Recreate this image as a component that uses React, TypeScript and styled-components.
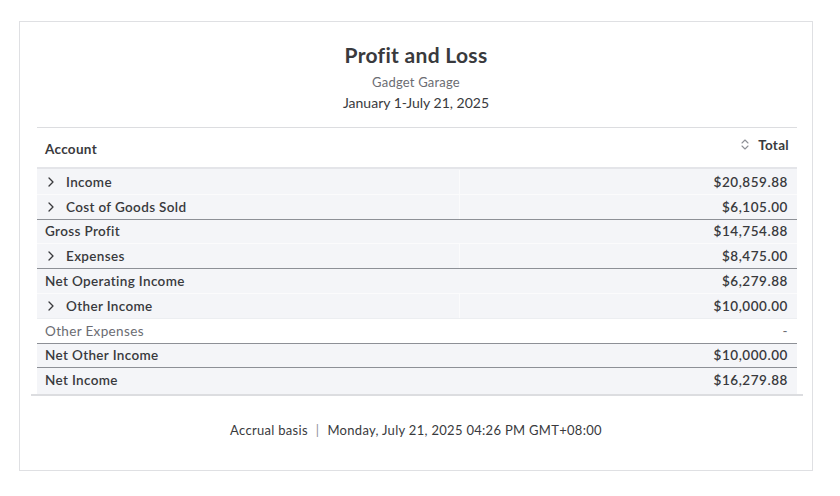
import React from "react";
import styled, { createGlobalStyle } from "styled-components";

const GlobalStyle = createGlobalStyle`
  html, body { margin: 0; padding: 0; background: #ffffff; }
  body { font-family: Lato, "Noto Sans", sans-serif; color: #393a3d; -webkit-font-smoothing: antialiased; }
`;

const Page = styled.div`
  padding: 21px 0 0 19px;
`;

const Card = styled.div`
  box-sizing: border-box;
  width: 794px;
  height: 450px;
  border: 1px solid #dfe0e3;
  background: #ffffff;
  display: flex;
  flex-direction: column;
`;

const Header = styled.header`
  text-align: center;
  padding-top: 19px;
`;

const Title = styled.h1`
  margin: 0;
  font-size: 21px;
  line-height: 28px;
  font-weight: 700;
  letter-spacing: 0.3px;
  color: #393a3d;
`;

const Company = styled.div`
  margin-top: 4px;
  font-size: 13px;
  line-height: 18px;
  letter-spacing: 0.2px;
  color: #6b6c72;
`;

const Period = styled.div`
  margin-top: 2px;
  font-size: 14px;
  line-height: 20px;
  color: #393a3d;
`;

const TableArea = styled.div`
  margin: 14px 9px 0 11px;
  border-bottom: 2px solid #dcdde0;
`;

const Table = styled.div`
  margin: 0 6px;
  border-top: 1px solid #dcdde0;
`;

const HeadRow = styled.div`
  display: flex;
  align-items: center;
  justify-content: space-between;
  height: 39px;
  padding: 0 8px;
  border-bottom: 2px solid #e4e5e9;
  font-size: 13.5px;
  font-weight: 700;
  letter-spacing: 0.3px;
  color: #393a3d;
`;

const HeadLabel = styled.span<{ $lift?: boolean }>`
  display: inline-flex;
  align-items: center;
  gap: 9px;
  transform: translateY(${(p) => (p.$lift ? "-3px" : "1px")});
`;

type Kind = "group" | "total" | "plain";

const Row = styled.div<{ $kind: Kind }>`
  display: grid;
  grid-template-columns: 423px 1fr;
  height: 24.8px;
  box-sizing: border-box;
  background: ${(p) => (p.$kind === "plain" ? "#ffffff" : "#f4f5f8")};
  border-top: 1px solid
    ${(p) => (p.$kind === "total" ? "#8d9096" : p.$kind === "group" ? "#fbfbfc" : "#eceef1")};
  font-size: 13.5px;
  letter-spacing: 0.35px;
  font-weight: ${(p) => (p.$kind === "plain" ? 400 : 600)};
  color: ${(p) => (p.$kind === "plain" ? "#6b6c72" : "#393a3d")};
  &:first-child {
    border-top-color: transparent;
  }
  &:last-child {
    height: 26.5px;
    padding-bottom: 1.5px;
  }
`;

const LabelCell = styled.div<{ $divider: boolean }>`
  display: flex;
  align-items: center;
  gap: 9px;
  padding-left: 8px;
  border-right: 1px solid ${(p) => (p.$divider ? "#fbfbfc" : "transparent")};
`;

const ValueCell = styled.div`
  display: flex;
  align-items: center;
  justify-content: flex-end;
  padding-right: 9px;
  letter-spacing: 0.55px;
`;

const Footer = styled.div`
  margin-top: 25px;
  text-align: center;
  font-size: 13px;
  line-height: 18px;
  letter-spacing: 0.3px;
  color: #393a3d;
`;

const Sep = styled.span`
  display: inline-block;
  margin: 0 8px;
  color: #8d9096;
`;

const Chevron = () => (
  <svg width="12" height="12" viewBox="0 0 12 12" fill="none">
    <path d="M4 2 L8 6 L4 10" stroke="#393a3d" strokeWidth="1.3" strokeLinecap="round" strokeLinejoin="round" />
  </svg>
);

const SortIcon = () => (
  <svg width="8" height="11" viewBox="0 0 8 11" fill="none">
    <path d="M1 4 L4 1 L7 4" stroke="#8d9096" strokeWidth="1.1" strokeLinecap="round" strokeLinejoin="round" />
    <path d="M1 7 L4 10 L7 7" stroke="#8d9096" strokeWidth="1.1" strokeLinecap="round" strokeLinejoin="round" />
  </svg>
);

const rows: { kind: Kind; label: string; value: string }[] = [
  { kind: "group", label: "Income", value: "$20,859.88" },
  { kind: "group", label: "Cost of Goods Sold", value: "$6,105.00" },
  { kind: "total", label: "Gross Profit", value: "$14,754.88" },
  { kind: "group", label: "Expenses", value: "$8,475.00" },
  { kind: "total", label: "Net Operating Income", value: "$6,279.88" },
  { kind: "group", label: "Other Income", value: "$10,000.00" },
  { kind: "plain", label: "Other Expenses", value: "-" },
  { kind: "total", label: "Net Other Income", value: "$10,000.00" },
  { kind: "total", label: "Net Income", value: "$16,279.88" },
];

export default function App() {
  return (
    <>
      <GlobalStyle />
      <Page>
        <Card>
          <Header>
            <Title>Profit and Loss</Title>
            <Company>Gadget Garage</Company>
            <Period>January 1-July 21, 2025</Period>
          </Header>
          <TableArea>
            <Table>
              <HeadRow>
                <HeadLabel>Account</HeadLabel>
                <HeadLabel $lift>
                  <SortIcon />
                  Total
                </HeadLabel>
              </HeadRow>
              <div>
                {rows.map((r) => (
                  <Row key={r.label} $kind={r.kind}>
                    <LabelCell $divider={r.kind === "group"}>
                      {r.kind === "group" && <Chevron />}
                      {r.label}
                    </LabelCell>
                    <ValueCell>{r.value}</ValueCell>
                  </Row>
                ))}
              </div>
            </Table>
          </TableArea>
          <Footer>
            Accrual basis<Sep>|</Sep>Monday, July 21, 2025 04:26 PM GMT+08:00
          </Footer>
        </Card>
      </Page>
    </>
  );
}
